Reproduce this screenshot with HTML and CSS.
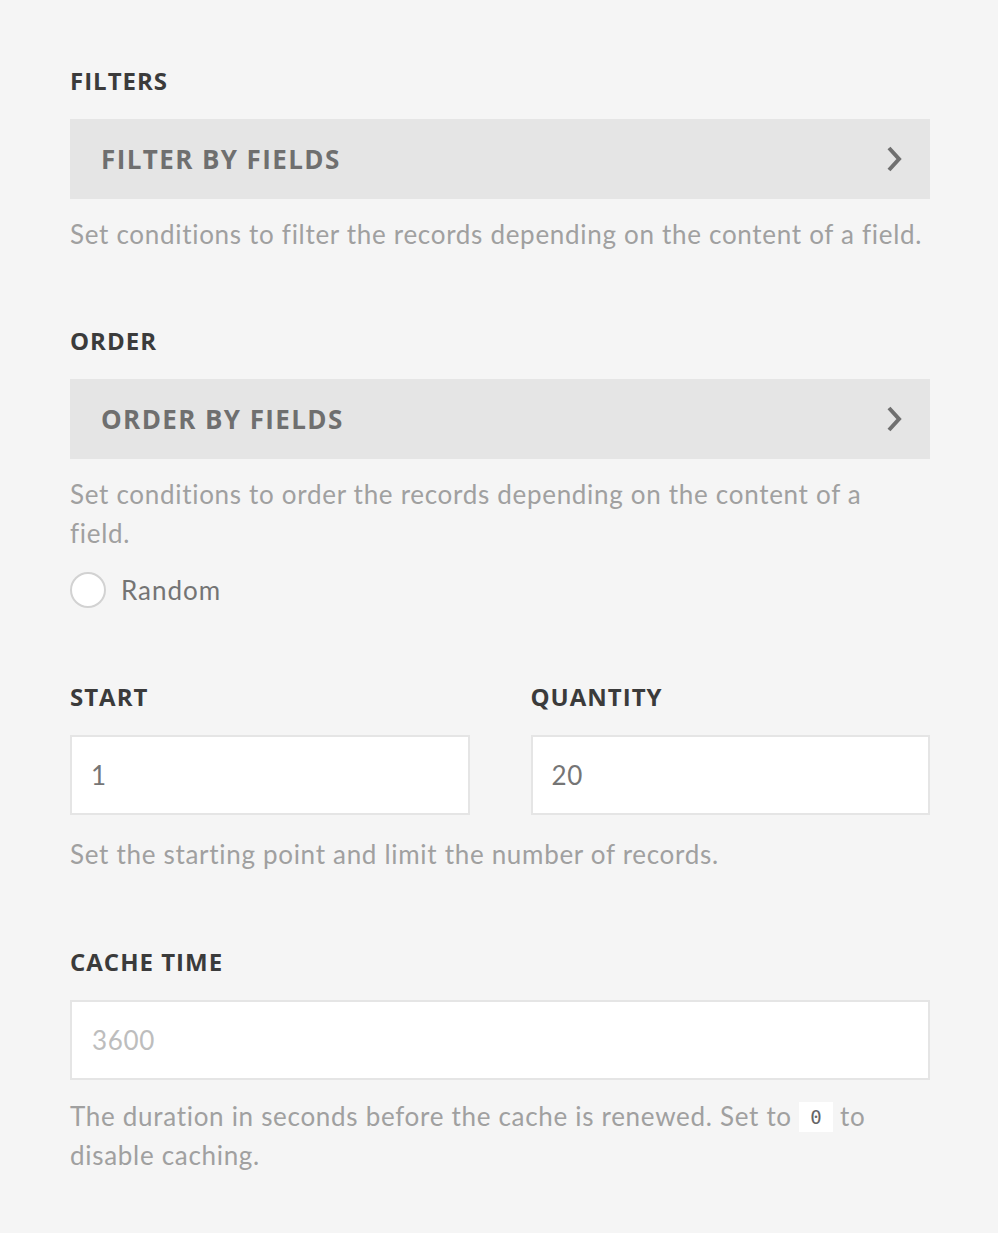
FILE: index.html
```html
<!DOCTYPE html>
<html>
<head>
<meta charset="utf-8">
<link rel="stylesheet" href="styles.css">
</head>
<body>
<div class="panel">
  <section class="section">
    <div class="label">FILTERS</div>
    <div class="nav-btn">
      <span>FILTER BY FIELDS</span>
      <svg class="chev" width="20" height="28" viewBox="0 0 20 28"><polyline points="4,3 14,14 4,25" fill="none" stroke="#707070" stroke-width="4"/></svg>
    </div>
    <p class="desc">Set conditions to filter the records depending on the content of a field.</p>
  </section>

  <section class="section section-order">
    <div class="label">ORDER</div>
    <div class="nav-btn">
      <span>ORDER BY FIELDS</span>
      <svg class="chev" width="20" height="28" viewBox="0 0 20 28"><polyline points="4,3 14,14 4,25" fill="none" stroke="#707070" stroke-width="4"/></svg>
    </div>
    <p class="desc">Set conditions to order the records depending on the content of a field.</p>
    <label class="radio-row"><span class="radio"></span><span class="radio-text">Random</span></label>
  </section>

  <section class="section section-range">
    <div class="cols">
      <div class="col">
        <div class="label">START</div>
        <div class="input">1</div>
      </div>
      <div class="col">
        <div class="label">QUANTITY</div>
        <div class="input">20</div>
      </div>
    </div>
    <p class="desc desc-after-input">Set the starting point and limit the number of records.</p>
  </section>

  <section class="section">
    <div class="label">CACHE TIME</div>
    <div class="input placeholder">3600</div>
    <p class="desc desc-cache">The duration in seconds before the cache is renewed. Set to <code class="code">0</code> to disable caching.</p>
  </section>
</div>
</body>
</html>
```

FILE: styles.css
```css
html, body {
  margin: 0;
  padding: 0;
  background: #f5f5f5;
}
.panel {
  padding: 66px 68px 40px 70px;
  font-family: "Lato", "Open Sans", sans-serif;
  font-variant-ligatures: none;
}
.section {
  margin-bottom: 72px;
}
.section-order {
  margin-bottom: 74px;
}
.section-range {
  margin-bottom: 73px;
}
.label {
  font-family: "Open Sans", "Lato", sans-serif;
  font-weight: 700;
  font-size: 24px;
  line-height: 30px;
  height: 30px;
  color: #3b3b3b;
  margin-bottom: 23px;
  letter-spacing: 1px;
}
.nav-btn {
  height: 80px;
  background: #e5e5e5;
  display: flex;
  align-items: center;
  justify-content: space-between;
  padding: 0 25px 0 31px;
  box-sizing: border-box;
  font-family: "Open Sans", "Lato", sans-serif;
  font-weight: 700;
  font-size: 26px;
  color: #6f6f6f;
  letter-spacing: 1.4px;
}
.chev {
  display: block;
}
.desc {
  margin: 16px 0 0 0;
  padding-right: 5px;
  font-size: 26px;
  line-height: 39px;
  color: #a0a0a0;
  letter-spacing: 0.7px;
}
.desc-after-input {
  margin-top: 20px;
}
.desc-cache {
  margin-top: 17px;
}
.radio-row {
  display: flex;
  align-items: center;
  margin-top: 19px;
  height: 36px;
}
.radio {
  width: 36px;
  height: 36px;
  box-sizing: border-box;
  border: 2px solid #d2d2d2;
  border-radius: 50%;
  background: #fff;
}
.radio-text {
  margin-left: 15px;
  font-size: 26px;
  color: #747474;
  letter-spacing: 1px;
}
.cols {
  display: grid;
  grid-template-columns: 1fr 1fr;
  column-gap: 61px;
}
.input {
  height: 80px;
  box-sizing: border-box;
  border: 2px solid #e5e5e5;
  background: #fff;
  display: flex;
  align-items: center;
  padding-left: 19px;
  font-size: 26px;
  color: #757575;
  letter-spacing: 0.65px;
}
.input.placeholder {
  color: #bdbdbd;
  padding-left: 20px;
}
.code {
  display: inline-block;
  background: #fff;
  font-family: "DejaVu Sans Mono", monospace;
  font-size: 19px;
  line-height: 30px;
  padding: 0 11px;
  color: #666;
  vertical-align: 2px;
  letter-spacing: 0;
}
```
